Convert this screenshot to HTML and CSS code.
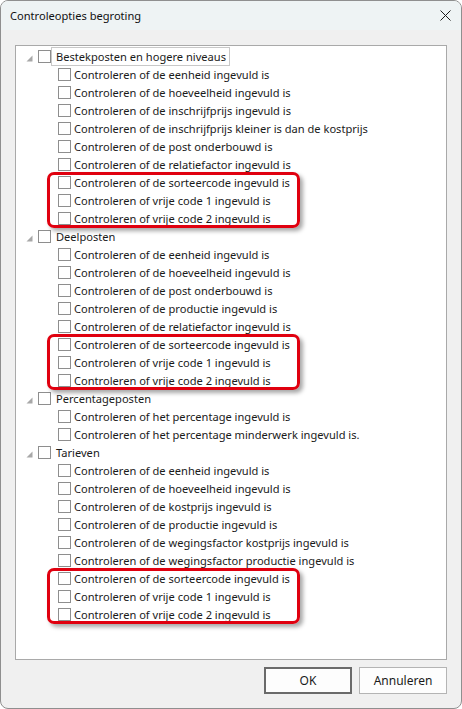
FILE: index.html
```html
<!DOCTYPE html>
<html lang="nl">
<head>
  <meta charset="UTF-8">
  <title>Controleopties begroting</title>
  <link rel="stylesheet" href="styles.css">
</head>
<body>

  <div class="window">
    <div class="titlebar">
      <span class="title">Controleopties begroting</span>
      <svg class="close" width="11" height="11" viewBox="0 0 11 11">
        <path d="M0.5 0.5 L10.5 10.5 M10.5 0.5 L0.5 10.5" stroke="#1b1b1b" stroke-width="1" fill="none"/>
      </svg>
    </div>

    <div class="content">
      <div class="tree" id="tree"></div>

      <div class="buttons">
        <button class="btn default">OK</button>
        <button class="btn">Annuleren</button>
      </div>
    </div>
  </div>

  <script>
    const groups = [
      {
        name: 'Bestekposten en hogere niveaus',
        focus: true,
        items: [
          'Controleren of de eenheid ingevuld is',
          'Controleren of de hoeveelheid ingevuld is',
          'Controleren of de inschrijfprijs ingevuld is',
          'Controleren of de inschrijfprijs kleiner is dan de kostprijs',
          'Controleren of de post onderbouwd is',
          'Controleren of de relatiefactor ingevuld is'
        ],
        flagged: true
      },
      {
        name: 'Deelposten',
        items: [
          'Controleren of de eenheid ingevuld is',
          'Controleren of de hoeveelheid ingevuld is',
          'Controleren of de post onderbouwd is',
          'Controleren of de productie ingevuld is',
          'Controleren of de relatiefactor ingevuld is'
        ],
        flagged: true
      },
      {
        name: 'Percentageposten',
        items: [
          'Controleren of het percentage ingevuld is',
          'Controleren of het percentage minderwerk ingevuld is.'
        ],
        flagged: false
      },
      {
        name: 'Tarieven',
        items: [
          'Controleren of de eenheid ingevuld is',
          'Controleren of de hoeveelheid ingevuld is',
          'Controleren of de kostprijs ingevuld is',
          'Controleren of de productie ingevuld is',
          'Controleren of de wegingsfactor kostprijs ingevuld is',
          'Controleren of de wegingsfactor productie ingevuld is'
        ],
        flagged: true
      }
    ];

    const extra = [
      'Controleren of de sorteercode ingevuld is',
      'Controleren of vrije code 1 ingevuld is',
      'Controleren of vrije code 2 ingevuld is'
    ];

    function childRow(text) {
      return `<div class="row child"><span class="check"></span><span class="label">${text}</span></div>`;
    }

    const tree = document.getElementById('tree');
    let html = '';

    groups.forEach(group => {
      html += `
        <div class="row root">
          <svg class="toggle" width="7" height="7" viewBox="0 0 7 7"><polygon points="6.5,0.5 6.5,6.5 0.5,6.5" fill="#a8a8a8"/></svg>
          <span class="check"></span>
          <span class="label${group.focus ? ' focus' : ''}">${group.name}</span>
        </div>`;
      group.items.forEach(item => { html += childRow(item); });
      if (group.flagged) {
        html += '<div class="flagged">' + extra.map(childRow).join('') + '</div>';
      }
    });

    tree.innerHTML = html;
  </script>

</body>
</html>
```

FILE: styles.css
```css
body {
  margin: 0;
  background: #ffffff;
  font-family: "Noto Sans", "Liberation Sans", sans-serif;
  font-size: 11.1px;
  color: #1a1a1a;
}

.window {
  width: 462px;
  height: 709px;
  box-sizing: border-box;
  border: 1px solid #8f8f8f;
  border-radius: 8px;
  background: #f0f0f0;
  overflow: hidden;
  display: flex;
  flex-direction: column;
}

.titlebar {
  height: 29px;
  background: #eef3f4;
  display: flex;
  align-items: center;
  justify-content: space-between;
  padding: 0 10px 0 9px;
}

.title {
  color: #111;
}

.close {
  display: block;
}

.content {
  flex: 1;
  display: flex;
  flex-direction: column;
  padding: 15px 14px 14px 14px;
}

.tree {
  height: 615px;
  box-sizing: border-box;
  background: #fff;
  border: 1px solid #a9a9a9;
  padding-top: 1px;
}

.row {
  height: 18px;
  display: flex;
  align-items: center;
  white-space: nowrap;
}

.row.root {
  padding-left: 10px;
}

.row.child {
  padding-left: 42px;
}

.toggle {
  display: block;
  margin-right: 5px;
  margin-top: 4px;
}

.check {
  width: 13px;
  height: 13px;
  box-sizing: border-box;
  border: 1px solid #8e8e8e;
  background: #fff;
  flex-shrink: 0;
}

.row.child .check {
  margin-right: 3px;
}

.row.root .label {
  padding: 0 3px 0 4px;
  border: 1px solid transparent;
  line-height: 17px;
}

.row.root .label.focus {
  border-color: #c8c8c8;
}

.flagged {
  position: relative;
}

.flagged::after {
  content: "";
  position: absolute;
  left: 31px;
  top: -1px;
  width: 253px;
  height: 56px;
  box-sizing: border-box;
  border: 3px solid #e0000f;
  border-radius: 7px;
  box-shadow: 3px 3px 4px rgba(0, 0, 0, 0.35);
  pointer-events: none;
}

.buttons {
  display: flex;
  justify-content: flex-end;
  gap: 7px;
  margin-top: 7px;
}

.btn {
  font-family: inherit;
  font-size: 12px;
  color: #1a1a1a;
  height: 27px;
  width: 88px;
  background: #fdfdfd;
  border: 1px solid #b4b4b4;
  border-radius: 0;
  padding: 0;
}

.btn.default {
  border: 2px solid #6a6a6a;
}
```
